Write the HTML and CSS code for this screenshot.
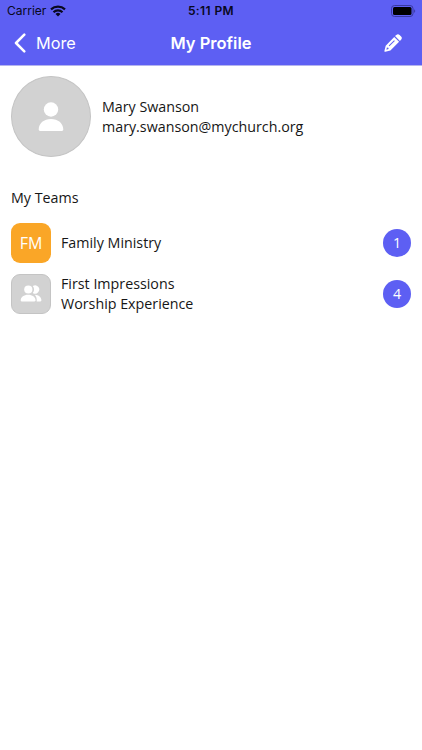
FILE: index.html
```html
<!DOCTYPE html>
<html lang="en">
<head>
  <meta charset="UTF-8">
  <meta name="viewport" content="width=device-width, initial-scale=1.0">
  <title>My Profile</title>
  <link rel="stylesheet" href="styles.css">
</head>
<body>
  <header>
    <div class="status-bar">
      <div class="carrier">
        <span>Carrier</span>
        <svg width="16" height="12" viewBox="0 0 16 12" fill="none" stroke="#080820" stroke-width="2.2">
          <path d="M1 4.4a10.2 10.2 0 0 1 14 0" />
          <path d="M3.5 7.2a6.5 6.5 0 0 1 9 0" />
          <path d="M8 11.5L5.5 9a3.7 3.7 0 0 1 5 0z" fill="#080820" stroke="none" />
        </svg>
      </div>
      <span class="time">5:11 PM</span>
      <div class="battery">
        <svg width="25" height="12" viewBox="0 0 25 12">
          <rect x="0.5" y="0.5" width="21.5" height="11" rx="3" fill="none" stroke="#3939a0" />
          <rect x="2" y="2" width="18.5" height="8" rx="1.5" fill="#000" />
          <path d="M23.2 4.2c1.3.5 1.3 3.1 0 3.6z" fill="#3939a0" />
        </svg>
      </div>
    </div>
    <nav class="nav-bar">
      <a class="back">
        <svg width="12" height="20" viewBox="0 0 12 20" fill="none" stroke="#fff" stroke-width="2.5" stroke-linecap="round" stroke-linejoin="round">
          <path d="M10.3 1.7L2 10l8.3 8.3" />
        </svg>
        <span>More</span>
      </a>
      <h1>My Profile</h1>
      <a class="edit">
        <svg width="18" height="18" viewBox="0 0 18 18" fill="#fff">
          <path fill-rule="evenodd" d="M10.2 2.9l4.9 4.9-8.7 8.7-5.1 1.3c-.6.1-1-.3-.9-.9l1.3-5.2zM10.1 6.2l-5.4 5.4.7.7 5.4-5.4zM2.9 13.5l-.5 2.2 2.2-.6-.2-1.3z" />
          <path d="M11 2.1L12.3.9c1-1 2.3-1 3.3 0l1.5 1.5c1 1 1 2.3 0 3.3L15.9 7z" />
        </svg>
      </a>
    </nav>
  </header>

  <main>
    <section class="profile">
      <div class="avatar">
        <svg width="26" height="30" viewBox="0 0 26 30" fill="#fff">
          <circle cx="13" cy="7.5" r="7.2" />
          <path d="M.7 27.5C.7 21 6 16.9 13 16.9s12.3 4.1 12.3 10.6c0 .9-.5 1.4-1.4 1.4H2.1c-.9 0-1.4-.5-1.4-1.4z" />
        </svg>
      </div>
      <div class="details">
        <div>Mary Swanson</div>
        <div class="email">mary.swanson@mychurch.org</div>
      </div>
    </section>

    <h2>My Teams</h2>
    <ul class="teams">
      <li>
        <div class="team-icon orange">FM</div>
        <div class="team-name">Family Ministry</div>
        <span class="count">1</span>
      </li>
      <li>
        <div class="team-icon gray">
          <svg width="22" height="18" viewBox="0 0 22 18" fill="#fff">
            <path d="M12.8 1.1a4.1 4.1 0 1 1 0 6.8 5.6 5.6 0 0 0 0-6.8z" />
            <path d="M14.8 9.8c4.1.2 6.6 2.7 6.6 5.5 0 .8-.4 1.1-1 1.1h-3.7c.3-2.6-.3-4.9-1.9-6.6z" />
            <circle cx="8.3" cy="4.5" r="4.1" />
            <path d="M.7 15.3c0-3.3 3.2-5.6 7.4-5.6s7.5 2.3 7.5 5.6c0 .8-.4 1.1-1.1 1.1H1.7c-.7 0-1-.4-1-1.1z" />
          </svg>
        </div>
        <div class="team-name">First Impressions<br>Worship Experience</div>
        <span class="count">4</span>
      </li>
    </ul>
  </main>
</body>
</html>
```
FILE: styles.css
```css
* {
  box-sizing: border-box;
}
body {
  margin: 0;
  background: #fff;
  color: #161616;
  font-family: "Open Sans", sans-serif;
  font-size: 14.27px;
  line-height: 20px;
}
header {
  height: 66px;
  background: #5d5ff3;
  border-bottom: 1px solid #b4b4ee;
  font-family: Inter, sans-serif;
}
.status-bar {
  display: grid;
  grid-template-columns: 1fr auto 1fr;
  align-items: center;
  height: 22px;
  padding: 0 6px;
  color: #080820;
  font-size: 12px;
}
.carrier {
  display: flex;
  align-items: center;
  gap: 4px;
  padding-left: 1px;
}
.time {
  font-weight: 600;
  letter-spacing: 0.4px;
}
.battery {
  display: flex;
  justify-content: flex-end;
}
.nav-bar {
  display: grid;
  grid-template-columns: 1fr auto 1fr;
  align-items: center;
  height: 42px;
  padding: 0 14px;
  color: #fff;
}
.back {
  display: flex;
  align-items: center;
  gap: 10px;
  font-size: 16.3px;
}
h1 {
  margin: 0;
  font-size: 16.5px;
  font-weight: 600;
}
.edit {
  display: flex;
  justify-content: flex-end;
  padding-right: 6px;
}
main {
  padding: 10px 11px;
}
.profile {
  display: flex;
  align-items: center;
  gap: 11px;
}
.avatar {
  display: flex;
  align-items: center;
  justify-content: center;
  width: 80px;
  height: 81px;
  border: 1px solid #c4c4c4;
  border-radius: 50%;
  background: #d2d2d2;
}
h2 {
  margin: 31px 0 15px;
  font-size: 14.27px;
  font-weight: 400;
}
.teams {
  display: flex;
  flex-direction: column;
  gap: 11px;
  margin: 0;
  padding: 0;
  list-style: none;
}
.teams li {
  display: flex;
  align-items: center;
  gap: 10px;
}
.team-icon {
  display: flex;
  align-items: center;
  justify-content: center;
  width: 40px;
  height: 40px;
  border-radius: 9px;
  color: #fff;
  font-size: 16px;
}
.orange {
  background: #faa627;
}
.gray {
  border: 1px solid #c4c4c4;
  background: #d2d2d2;
}
.team-name {
  flex: 1;
}
.count {
  width: 28px;
  height: 28px;
  border-radius: 50%;
  background: #5d5ff3;
  color: #fff;
  line-height: 28px;
  text-align: center;
}
```
